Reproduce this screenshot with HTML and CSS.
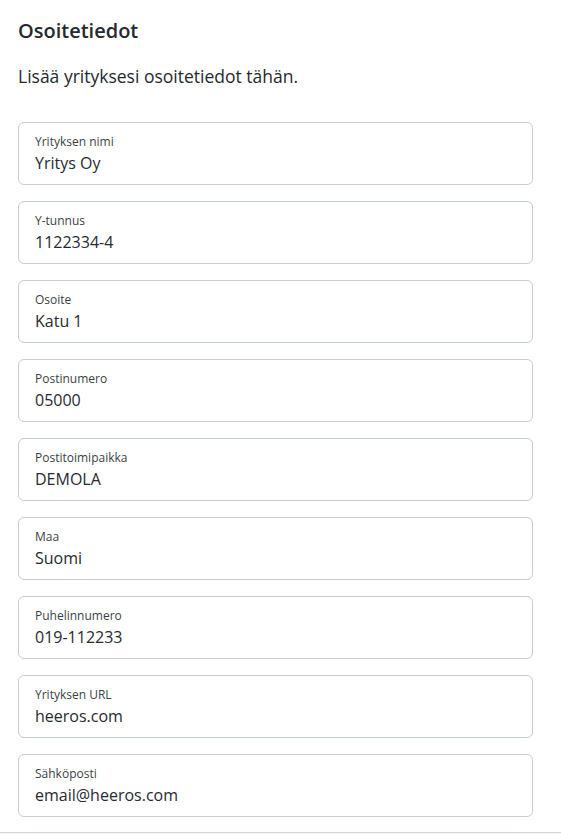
FILE: index.html
```html
<!DOCTYPE html>
<html>
<head>
    <meta charset="utf-8">
    <title>Osoitetiedot</title>
    <meta name="viewport" content="width=device-width, initial-scale=1">
    <link rel="stylesheet" href="styles.css">
</head>
<body>
    <div class="panel">
        <h2 class="title">Osoitetiedot</h2>
        <p class="intro">Lisää yrityksesi osoitetiedot tähän.</p>

        <div class="field">
            <label>Yrityksen nimi</label>
            <input type="text" value="Yritys Oy">
        </div>
        <div class="field">
            <label>Y-tunnus</label>
            <input type="text" value="1122334-4">
        </div>
        <div class="field">
            <label>Osoite</label>
            <input type="text" value="Katu 1">
        </div>
        <div class="field">
            <label>Postinumero</label>
            <input type="text" value="05000">
        </div>
        <div class="field">
            <label>Postitoimipaikka</label>
            <input type="text" value="DEMOLA">
        </div>
        <div class="field">
            <label>Maa</label>
            <input type="text" value="Suomi">
        </div>
        <div class="field">
            <label>Puhelinnumero</label>
            <input type="text" value="019-112233">
        </div>
        <div class="field">
            <label>Yrityksen URL</label>
            <input type="text" value="heeros.com">
        </div>
        <div class="field">
            <label>Sähköposti</label>
            <input type="text" value="email@heeros.com">
        </div>
    </div>
    <div class="footer"></div>
</body>
</html>
```

FILE: styles.css
```css
* {
    box-sizing: border-box;
}

body {
    margin: 0;
    background-color: #fff;
    font-family: 'Open Sans', 'Noto Sans', sans-serif;
    color: #262a30;
}

.panel {
    padding: 16px 28px 15px 18px;
}

.title {
    margin: 0;
    font-size: 20px;
    font-weight: 600;
    line-height: 30px;
    color: #26292e;
}

.intro {
    margin: 17px 0 33px 0;
    font-size: 17.5px;
    line-height: 26px;
    color: #26292e;
}

.field {
    display: flex;
    flex-direction: column;
    height: 63px;
    margin-bottom: 16px;
    padding: 10px 16px 0 16px;
    border: 1px solid #c5cad9;
    border-radius: 6px;
}

.field:last-child {
    margin-bottom: 0;
}

.field label {
    font-size: 12px;
    line-height: 18px;
    color: #3a3f47;
}

.field input {
    margin-top: 0;
    padding: 0;
    border: none;
    outline: none;
    font-family: inherit;
    font-size: 16px;
    line-height: 24px;
    color: #262a30;
    background: transparent;
}

.footer {
    height: 20px;
    border-top: 1px solid #d3d7e0;
    background-color: #f4f5f8;
}
```
